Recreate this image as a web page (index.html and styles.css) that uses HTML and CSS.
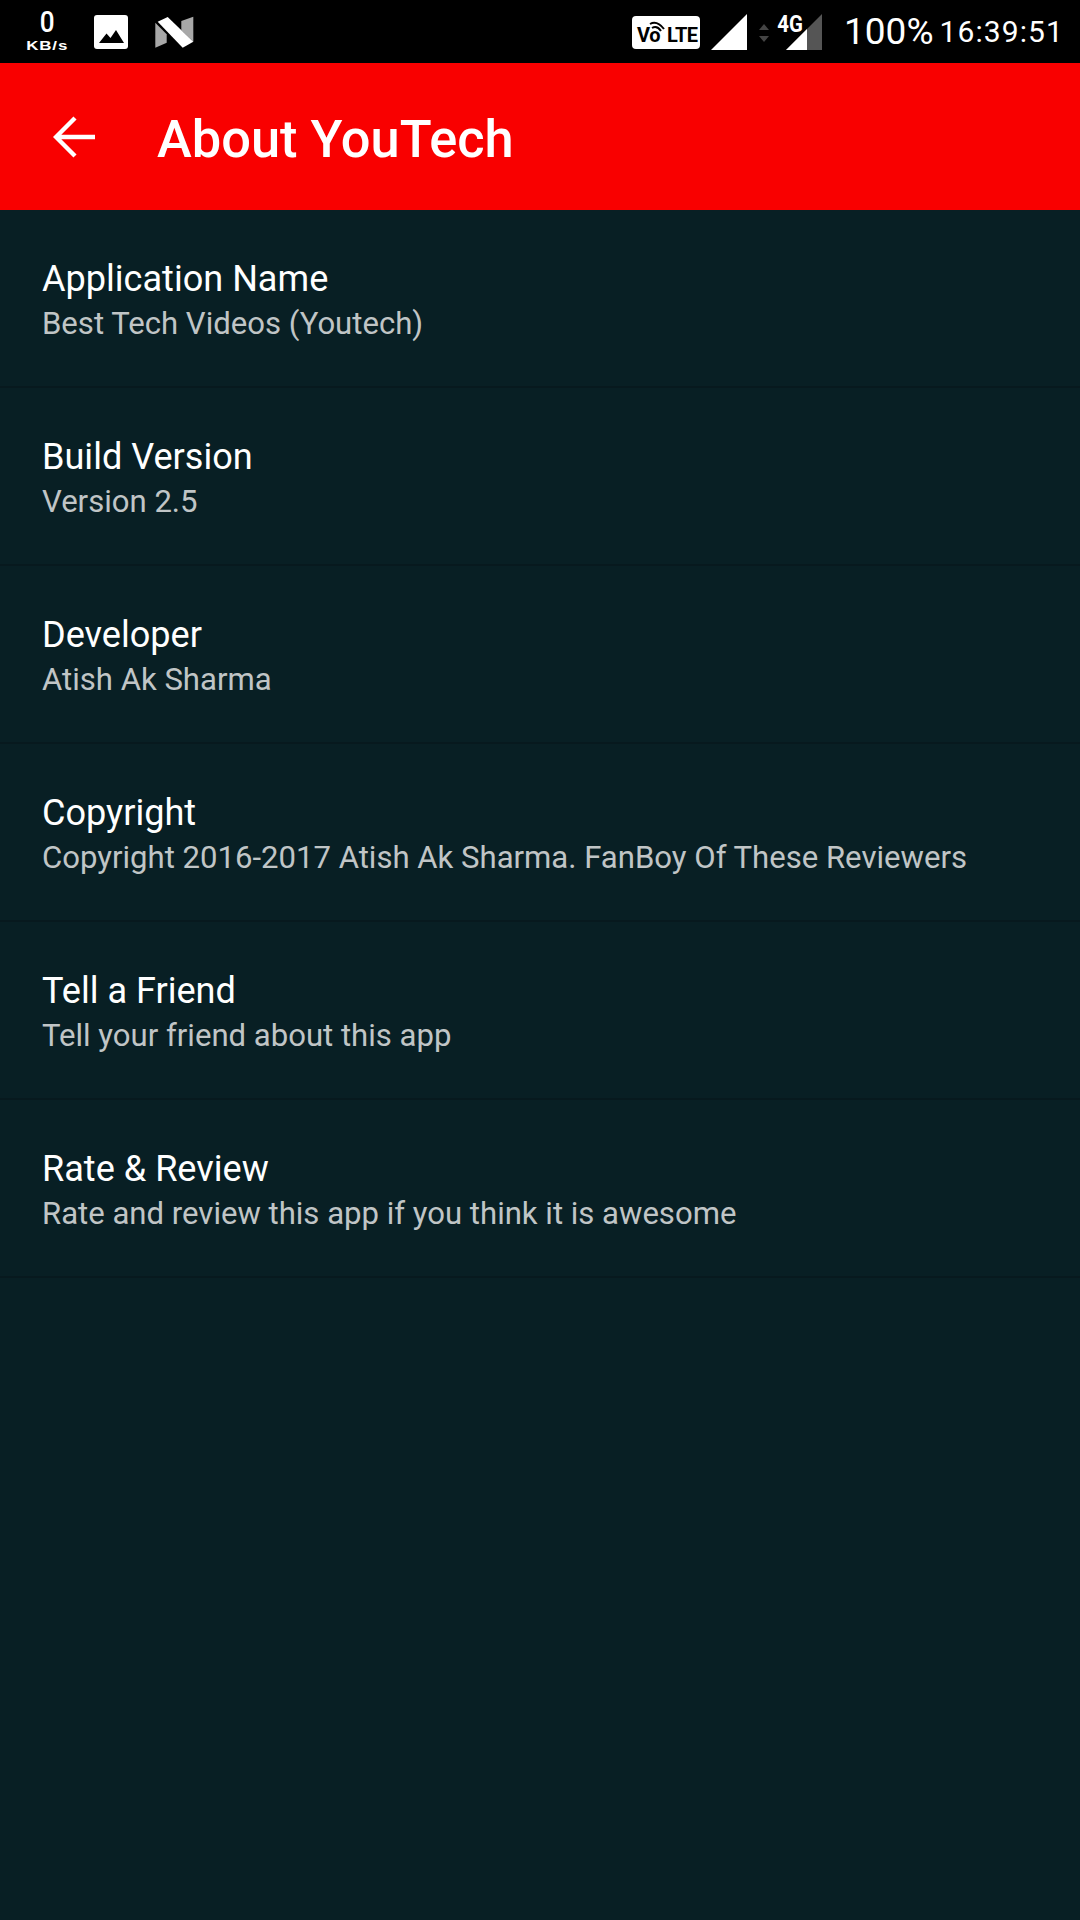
FILE: index.html
```html
<!DOCTYPE html>
<html lang="en">
<head>
<meta charset="utf-8">
<title>About YouTech</title>
<link rel="stylesheet" href="styles.css">
</head>
<body>
<div class="screen">
  <header class="status">
    <div class="status-left">
      <div class="speed"><span class="speed-num">0</span><span class="speed-unit">KB/s</span></div>
      <svg class="ic-pic" width="34" height="34" viewBox="0 0 34 34"><rect width="34" height="34" rx="3" fill="#fff"/><path d="M5 28 L12.5 18.5 L16.5 23 L22 15 L30 28 Z" fill="#000"/></svg>
      <svg class="ic-n" width="39" height="32" viewBox="0 0 39 32"><path d="M0.3 6.7 L11.7 18.3 V26.7 L0.3 31.7 Z" fill="#a8a8a8"/><path d="M38.3 0.7 V25.7 L26.3 14.3 V5 Z" fill="#a8a8a8"/><path d="M2.7 5.7 L12.7 1 L38.3 25.7 L27.7 31.7 Z" fill="#fff"/></svg>
    </div>
    <div class="status-right">
      <div class="volte">
        <span class="volte-vo">Vo</span><span class="volte-lte">LTE</span>
        <svg class="volte-arcs" width="16" height="14" viewBox="0 0 16 14"><path d="M1 4 Q8 0 15 9 M3 8 Q8 5 12 11" fill="none" stroke="#000" stroke-width="2"/></svg>
      </div>
      <svg class="ic-sig" width="36" height="36" viewBox="0 0 36 36"><path d="M0 36 L36 0 V36 Z" fill="#fff"/></svg>
      <svg class="ic-arrows" width="10" height="18" viewBox="0 0 10 18"><path d="M5 0 L10 6 H0 Z M0 12 H10 L5 18 Z" fill="#444"/></svg>
      <div class="sig2">
        <svg width="36" height="36" viewBox="0 0 36 36"><path d="M0 36 L36 0 V36 Z" fill="#555"/><path d="M0 36 L21 15 V36 Z" fill="#fff"/></svg>
        <span class="four-g">4G</span>
      </div>
      <span class="batt">100%</span>
      <span class="clock">16:39:51</span>
    </div>
  </header>
  <div class="appbar">
    <svg class="back" width="42" height="42" viewBox="0 0 42 42"><path d="M42 21 H5 M22 2 L3 21 L22 40" fill="none" stroke="#fff" stroke-width="4.4"/></svg>
    <h1 class="title">About YouTech</h1>
  </div>
  <main class="list">
    <div class="row"><div class="row-title">Application Name</div><div class="row-sub">Best Tech Videos (Youtech)</div></div>
    <div class="row"><div class="row-title">Build Version</div><div class="row-sub">Version 2.5</div></div>
    <div class="row"><div class="row-title">Developer</div><div class="row-sub">Atish Ak Sharma</div></div>
    <div class="row"><div class="row-title">Copyright</div><div class="row-sub">Copyright 2016-2017 Atish Ak Sharma. FanBoy Of These Reviewers</div></div>
    <div class="row"><div class="row-title">Tell a Friend</div><div class="row-sub">Tell your friend about this app</div></div>
    <div class="row"><div class="row-title">Rate &amp; Review</div><div class="row-sub">Rate and review this app if you think it is awesome</div></div>
  </main>
</div>
</body>
</html>
```
FILE: styles.css
```css
* { box-sizing: border-box; }
html, body { margin: 0; padding: 0; }
body { width: 1080px; height: 1920px; background: #081f24; font-family: Roboto, sans-serif; overflow: hidden; }
.screen { display: flex; flex-direction: column; height: 1920px; }
.status { height: 63px; background: #000; color: #fff; display: flex; justify-content: space-between; align-items: center; flex: none; }
.status-left { display: flex; align-items: center; padding-left: 22px; }
.speed { display: flex; flex-direction: column; align-items: center; width: 50px; }
.speed-num { font-size: 29px; line-height: 29px; font-weight: 500; margin-top: -3px; transform: scaleX(0.9); }
.speed-unit { font-size: 13px; line-height: 14px; font-weight: 700; letter-spacing: 0.7px; font-family: "Liberation Sans", sans-serif; transform: scaleX(1.3); margin-top: 2px; }
.ic-pic { margin-left: 22px; }
.ic-n { margin-left: 27px; }
.status-right { display: flex; align-items: center; padding-right: 16px; }
.volte { position: relative; width: 68px; height: 33px; background: #fff; border-radius: 4px; color: #000; font-weight: 700; font-size: 20px; line-height: 33px; display: flex; align-items: flex-end; padding-left: 5px; margin-top: 1px; }
.volte-vo { line-height: 28px; letter-spacing: -0.5px; }
.volte-lte { margin-left: 7px; line-height: 28px; letter-spacing: -0.6px; }
.volte-arcs { position: absolute; left: 17px; top: 4px; }
.ic-sig { margin-left: 11px; }
.ic-arrows { margin-left: 12px; margin-top: 3px; }
.sig2 { position: relative; margin-left: 17px; width: 36px; height: 36px; }
.sig2 svg { display: block; }
.four-g { position: absolute; left: -11px; top: -2px; font-size: 24px; line-height: 24px; font-weight: 700; transform: scaleX(0.85); }
.batt { margin-left: 22px; font-size: 37px; line-height: 40px; color: #fff; }
.clock { margin-left: 6px; font-size: 30px; line-height: 40px; letter-spacing: 1.1px; }
.appbar { height: 147px; background: #f90000; display: flex; align-items: center; padding-left: 53px; flex: none; }
.back { display: block; }
.title { margin: 4px 0 0 62px; font-size: 52.4px; font-weight: 500; color: #fff; line-height: 60px; }
.list { flex: 1; display: flex; flex-direction: column; }
.row { height: 178px; border-bottom: 2px solid #07191e; padding: 48px 42px 0; }
.row-title { font-size: 36.1px; line-height: 42px; color: #fff; }
.row-sub { font-size: 31.1px; line-height: 46px; margin-top: 1px; color: #c0c5c6; }
```
